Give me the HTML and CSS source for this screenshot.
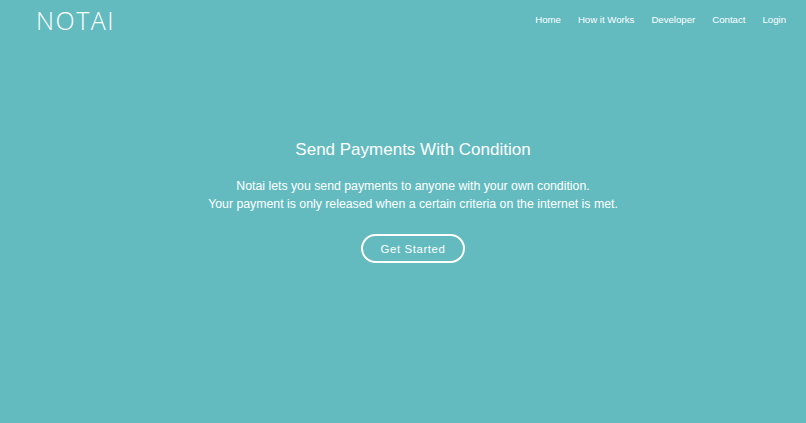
FILE: index.html
```html
<!DOCTYPE html>
<html lang="en">
<head>
<meta charset="utf-8">
<title>Notai</title>
<link rel="stylesheet" href="styles.css">
</head>
<body>
<div class="page">
  <header class="topbar">
    <a class="logo" href="#">NOTAI</a>
    <nav class="nav">
      <a href="#">Home</a>
      <a href="#">How it Works</a>
      <a href="#">Developer</a>
      <a href="#">Contact</a>
      <a href="#">Login</a>
    </nav>
  </header>
  <main class="hero">
    <h1 class="hero-title">Send Payments With Condition</h1>
    <p class="hero-text">Notai lets you send payments to anyone with your own condition.<br>Your payment is only released when a certain criteria on the internet is met.</p>
    <a class="btn" href="#">Get Started</a>
  </main>
</div>
</body>
</html>
```
FILE: styles.css
```css
* { box-sizing: border-box; }
html, body { margin: 0; padding: 0; }
body {
  background: #63bbbf;
  color: #ffffff;
  font-family: "Liberation Sans", Arial, sans-serif;
  height: 423px;
  overflow: hidden;
}
a { color: inherit; text-decoration: none; }
.page { display: flex; flex-direction: column; height: 100%; }
.topbar {
  height: 40px;
  display: flex;
  align-items: center;
  justify-content: space-between;
  padding: 0 20px 0 36px;
}
.logo {
  font-family: "Open Sans", sans-serif;
  font-weight: 300;
  font-size: 25px;
  letter-spacing: 1.5px;
  line-height: 1;
  margin-top: 0;
}
.nav { display: flex; gap: 17px; font-size: 9.65px; margin-top: -1px; }
.hero {
  display: flex;
  flex-direction: column;
  align-items: center;
  text-align: center;
  padding-top: 100px;
  padding-left: 20px;
}
.hero-title {
  margin: 0;
  font-weight: 400;
  font-size: 17px;
  line-height: 20px;
}
.hero-text {
  margin: 17px 0 0;
  font-size: 12.3px;
  line-height: 18px;
}
.btn {
  margin-top: 21px;
  width: 104px;
  height: 29px;
  border: 2px solid #ffffff;
  border-radius: 15px;
  display: flex;
  align-items: center;
  justify-content: center;
  font-size: 11.4px;
  letter-spacing: 0.6px;
}
```
